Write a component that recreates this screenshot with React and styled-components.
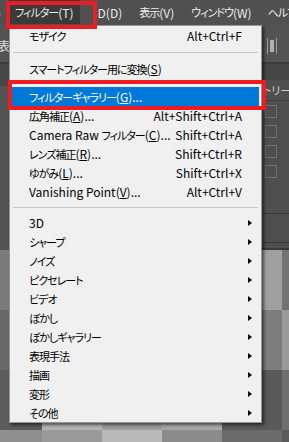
import React from 'react';
import styled, { createGlobalStyle } from 'styled-components';

const GlobalStyle = createGlobalStyle`
  html, body {
    margin: 0;
    padding: 0;
    background: #535353;
  }
  body {
    font-family: "Noto Sans CJK JP", "Noto Sans", sans-serif;
  }
`;

const Screen = styled.div`
  position: relative;
  width: 289px;
  height: 442px;
  overflow: hidden;
  background: #535353;
  display: flex;
  flex-direction: column;
`;

const MenuBar = styled.div`
  height: 24px;
  flex-shrink: 0;
  display: flex;
  align-items: stretch;
  background: #505050;
  color: #ececec;
  font-size: 12px;
  font-feature-settings: "palt";
`;

const BarItem = styled.div`
  display: flex;
  align-items: center;
  padding: 0 ${p => p.$pad ?? 6}px;
  margin-left: ${p => p.$ml || 0}px;
  background: ${p => (p.$active ? '#3a3a3a' : 'transparent')};
  white-space: nowrap;
`;

const Jp = styled.span`
  font-size: 11px;
  letter-spacing: -1px;
`;

const OptionsBar = styled.div`
  height: 38px;
  flex-shrink: 0;
  display: flex;
  align-items: center;
  justify-content: space-between;
  background: #535353;
  border-bottom: 2px solid #3c3c3c;
  color: #e0e0e0;
  font-size: 12px;
`;

const OptLabel = styled.span`
  margin-left: -2px;
  margin-top: 4px;
`;

const OptIcon = styled.div`
  width: 8px;
  height: 16px;
  margin-right: 12px;
  margin-top: 6px;
  border-left: 1px solid #9a9a9a;
  border-right: 1px solid #9a9a9a;
  display: flex;
  justify-content: center;
  &::after {
    content: '';
    width: 4px;
    height: 12px;
    margin-top: 2px;
    background: #b0b0b0;
  }
`;

const Upper = styled.div`
  height: 186px;
  flex-shrink: 0;
  display: grid;
  grid-template-columns: 1fr 27px;
`;

const Work = styled.div`
  display: grid;
  grid-template-rows: 22px 1fr;
  background: #535353;
  &::before {
    content: '';
    background: #474747;
  }
`;

const Panel = styled.div`
  display: flex;
  flex-direction: column;
  overflow: hidden;
  background: #4e4e4e;
  color: #d0d0d0;
  font-size: 11px;
  font-feature-settings: "palt";
`;

const PanelTabs = styled.div`
  height: 16px;
  background: #454545;
`;

const PanelTitle = styled.div`
  height: 20px;
  display: flex;
  align-items: center;
  margin-left: -19px;
  border-bottom: 1px solid #3e3e3e;
  white-space: nowrap;
`;

const Check = styled.div`
  width: 10px;
  height: 11px;
  margin: 4px 0 3px 3px;
  border: 1px solid #707070;
  border-left-color: #666;
`;

const PanelFoot = styled.div`
  margin-top: auto;
  height: 34px;
  border-top: 1px solid #3a3a3a;
  border-bottom: 2px solid #3a3a3a;
  box-shadow: inset 0 -5px 0 #4e4e4e, inset 0 -6px 0 #3a3a3a;
  background: #4e4e4e;
`;

const Mosaic = styled.div`
  flex: 1;
  display: grid;
  grid-template-columns: 42px 60px 60px 60px 60px 7px;
  grid-template-rows: 60px 60px 60px 12px;
  background: #5a5a5a;
`;

const Tile = styled.div`
  background: ${p => p.$c};
`;

const Menu = styled.div`
  position: absolute;
  left: 9px;
  top: 25px;
  width: 251px;
  background: #f0f0f0;
  border: 1px solid #979797;
  box-shadow: 2px 2px 3px rgba(0, 0, 0, 0.55);
  font-size: 12px;
  font-feature-settings: "palt";
  color: #000;
`;

const Row = styled.div`
  height: 19px;
  margin: 0 2px;
  padding-left: 17px;
  display: grid;
  grid-template-columns: 1fr auto 17px;
  align-items: center;
  white-space: nowrap;
  background: ${p => (p.$hl ? '#0078d7' : 'transparent')};
  color: ${p => (p.$hl ? '#fff' : '#000')};
`;

const Shortcut = styled.span`
  text-align: right;
`;

const Arrow = styled.span`
  width: 0;
  height: 0;
  margin-left: 6px;
  border-top: 3.5px solid transparent;
  border-bottom: 3.5px solid transparent;
  border-left: 4px solid #000;
`;

const Sep = styled.div`
  height: ${p => p.$h}px;
  margin: 0 3px;
  display: flex;
  align-items: center;
  &::after {
    content: '';
    flex: 1;
    height: 1px;
    background: #c8c8c8;
  }
`;

const RedBox = styled.div`
  position: absolute;
  left: ${p => p.$x}px;
  top: ${p => p.$y}px;
  width: ${p => p.$w}px;
  height: ${p => p.$h}px;
  border: 4px solid #ec1c24;
  box-sizing: border-box;
  pointer-events: none;
`;

// narrow the Japanese runs the way Meiryo UI does, keep latin at full size
const Text = ({ children }) =>
  children
    .split(/([\u3000-\u30ff\u4e00-\u9fff]+)/)
    .filter(Boolean)
    .map((part, i) =>
      /[\u3000-\u30ff\u4e00-\u9fff]/.test(part) ? <Jp key={i}>{part}</Jp> : <React.Fragment key={i}>{part}</React.Fragment>
    );

const items = [
  { label: 'モザイク', sc: 'Alt+Ctrl+F' },
  { sep: 14 },
  { label: 'スマートフィルター用に変換', key: 'S' },
  { sep: 9 },
  { label: 'フィルターギャラリー', key: 'G', dots: true, hl: true },
  { label: '広角補正', key: 'A', dots: true, sc: 'Alt+Shift+Ctrl+A' },
  { label: 'Camera Raw フィルター', key: 'C', dots: true, sc: 'Shift+Ctrl+A' },
  { label: 'レンズ補正', key: 'R', dots: true, sc: 'Shift+Ctrl+R' },
  { label: 'ゆがみ', key: 'L', dots: true, sc: 'Shift+Ctrl+X' },
  { label: 'Vanishing Point', key: 'V', dots: true, sc: 'Alt+Ctrl+V' },
  { sep: 12 },
  { label: '3D', sub: true },
  { label: 'シャープ', sub: true },
  { label: 'ノイズ', sub: true },
  { label: 'ピクセレート', sub: true },
  { label: 'ビデオ', sub: true },
  { label: 'ぼかし', sub: true },
  { label: 'ぼかしギャラリー', sub: true },
  { label: '表現手法', sub: true },
  { label: '描画', sub: true },
  { label: '変形', sub: true },
  { label: 'その他', sub: true },
];

const tiles = [
  '#7a7a7a', '#8e8e8e', '#a5a5a5', '#909090', '#a0a0a0', '#737373',
  '#686868', '#9a9a9a', '#b0b0b0', '#858585', '#7d7d7d', '#9a9a9a',
  '#5c5c5c', '#b3b3b3', '#9e9e9e', '#a9a9a9', '#595959', '#6f6f6f',
  '#8f8f8f', '#9a9a9a', '#b9b9b9', '#8b8b8b', '#6b6b6b', '#5a5a5a',
];

export default function App() {
  return (
    <Screen>
      <GlobalStyle />
      <MenuBar>
        <BarItem $pad={0} $ml={-3}>)</BarItem>
        <BarItem $active $ml={8} $pad={6}><Text>フィルター(T)</Text></BarItem>
        <BarItem $ml={10} $pad={8}>D(D)</BarItem>
        <BarItem $pad={9}><Text>表示(V)</Text></BarItem>
        <BarItem $pad={8}><Text>ウィンドウ(W)</Text></BarItem>
        <BarItem $pad={8}><Text>ヘルプ(H)</Text></BarItem>
      </MenuBar>
      <OptionsBar>
        <OptLabel>表示</OptLabel>
        <OptIcon />
      </OptionsBar>
      <Upper>
        <Work />
        <Panel>
          <PanelTabs />
          <PanelTitle>ヒストリー</PanelTitle>
          <Check />
          <Check />
          <Check />
          <Check />
          <PanelFoot />
        </Panel>
      </Upper>
      <Mosaic>
        {tiles.map((c, i) => (
          <Tile key={i} $c={c} />
        ))}
      </Mosaic>

      <Menu>
        {items.map((it, i) =>
          it.sep ? (
            <Sep key={i} $h={it.sep} />
          ) : (
            <Row key={i} $hl={it.hl}>
              <span>
                <Text>{it.label}</Text>
                {it.key && (
                  <>
                    (<u>{it.key}</u>)
                  </>
                )}
                {it.dots && '...'}
              </span>
              <Shortcut>{it.sc}</Shortcut>
              {it.sub ? <Arrow /> : <span />}
            </Row>
          )
        )}
      </Menu>

      <RedBox $x={6} $y={1} $w={91} $h={28} />
      <RedBox $x={8} $y={80} $w={258} $h={30} />
    </Screen>
  );
}
